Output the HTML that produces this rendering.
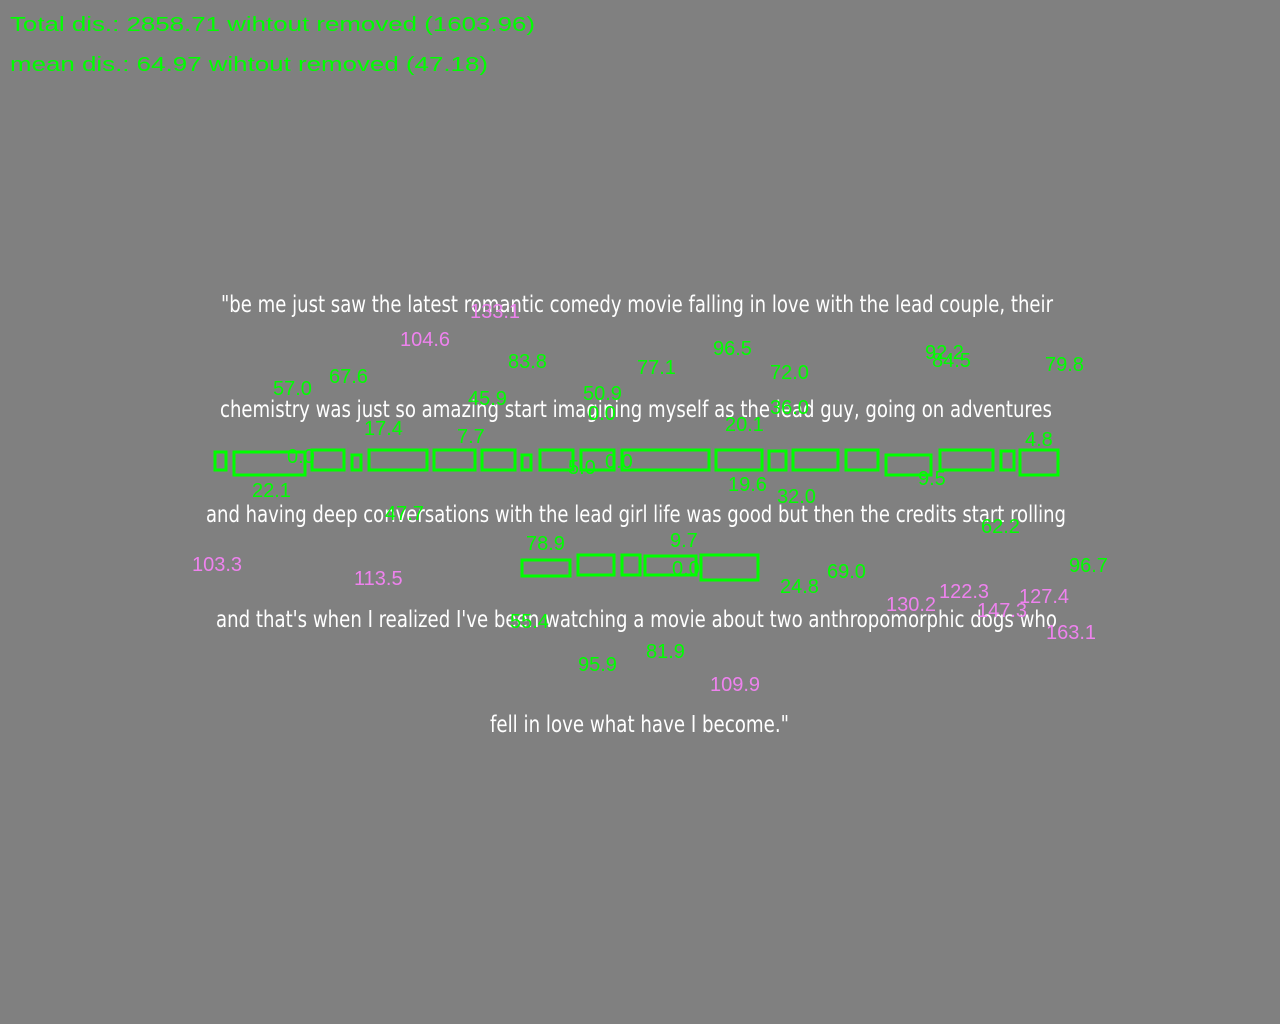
<!DOCTYPE html>
<html><head><meta charset="utf-8"><style>
html,body{margin:0;padding:0;background:#808080;width:1280px;height:1024px;overflow:hidden}
svg{display:block}
.g{fill:#00ff00;font-family:"Liberation Sans",sans-serif;font-size:20px}
.p{fill:#ee82ee;font-family:"Liberation Sans",sans-serif;font-size:20px}
.w{fill:#fff;font-family:"DejaVu Sans Condensed","DejaVu Sans",sans-serif;font-size:23px}
rect{fill:none;stroke:#00ff00;stroke-width:3}
</style></head><body>
<svg width="1280" height="1024" xmlns="http://www.w3.org/2000/svg">
<rect x="0" y="0" width="1280" height="1024" style="fill:#808080;stroke:none"/>
<text class="g" x="10" y="31" textLength="525" lengthAdjust="spacingAndGlyphs">Total dis.: 2858.71 wihtout removed (1603.96)</text>
<text class="g" x="10" y="71" textLength="478" lengthAdjust="spacingAndGlyphs">mean dis.: 64.97 wihtout removed (47.18)</text>

<g>
<rect x="215" y="452" width="11" height="18"/>
<rect x="234" y="452" width="71" height="23"/>
<rect x="312" y="450" width="32" height="20"/>
<rect x="352" y="455" width="9" height="15"/>
<rect x="369" y="450" width="58" height="20"/>
<rect x="434" y="450" width="41" height="20"/>
<rect x="482" y="450" width="33" height="20"/>
<rect x="522" y="455" width="9" height="15"/>
<rect x="540" y="450" width="33" height="20"/>
<rect x="581" y="450" width="33" height="20"/>
<rect x="622" y="450" width="87" height="20"/>
<rect x="716" y="450" width="46" height="20"/>
<rect x="769" y="451" width="17" height="19"/>
<rect x="793" y="450" width="45" height="20"/>
<rect x="846" y="450" width="32" height="20"/>
<rect x="886" y="455" width="45" height="20"/>
<rect x="940" y="450" width="53" height="20"/>
<rect x="1001" y="451" width="13" height="19"/>
<rect x="1020" y="450" width="38" height="25"/>
<rect x="522" y="560" width="48" height="16"/>
<rect x="578" y="555" width="36" height="20"/>
<rect x="622" y="555" width="18" height="20"/>
<rect x="645" y="556" width="51" height="19"/>
<rect x="701" y="555" width="57" height="25"/>
</g>

<text class="w" x="221" y="312" textLength="832" lengthAdjust="spacingAndGlyphs">"be me just saw the latest romantic comedy movie falling in love with the lead couple, their</text>
<text class="w" x="220" y="417" textLength="832" lengthAdjust="spacingAndGlyphs">chemistry was just so amazing start imagining myself as the lead guy, going on adventures</text>
<text class="w" x="206" y="522" textLength="860" lengthAdjust="spacingAndGlyphs">and having deep conversations with the lead girl life was good but then the credits start rolling</text>
<text class="w" x="216" y="627" textLength="841" lengthAdjust="spacingAndGlyphs">and that's when I realized I've been watching a movie about two anthropomorphic dogs who</text>
<text class="w" x="490" y="732" textLength="299" lengthAdjust="spacingAndGlyphs">fell in love what have I become."</text>

<text class="p" x="400" y="346">104.6</text>
<text class="p" x="470" y="318">133.1</text>
<text class="g" x="508" y="368">83.8</text>
<text class="g" x="637" y="374">77.1</text>
<text class="g" x="713" y="355">96.5</text>
<text class="g" x="770" y="379">72.0</text>
<text class="g" x="925" y="359">92.2</text>
<text class="g" x="932" y="367">84.5</text>
<text class="g" x="1045" y="371">79.8</text>
<text class="g" x="273" y="395">57.0</text>
<text class="g" x="329" y="383">67.6</text>
<text class="g" x="468" y="405">45.9</text>
<text class="g" x="583" y="400">50.9</text>
<text class="g" x="588" y="420">0.0</text>
<text class="g" x="364" y="435">17.4</text>
<text class="g" x="457" y="443">7.7</text>
<text class="g" x="725" y="431">20.1</text>
<text class="g" x="770" y="414">36.0</text>
<text class="g" x="1025" y="446">4.8</text>
<text class="g" x="287" y="463">0.0</text>
<text class="g" x="568" y="474">5.0</text>
<text class="g" x="605" y="468">0.0</text>
<text class="g" x="252" y="497">22.1</text>
<text class="g" x="728" y="491">19.6</text>
<text class="g" x="777" y="503">32.0</text>
<text class="g" x="918" y="485">9.5</text>
<text class="g" x="385" y="520">47.7</text>
<text class="g" x="981" y="533">62.2</text>
<text class="g" x="526" y="550">78.9</text>
<text class="g" x="670" y="547">9.7</text>
<text class="g" x="672" y="575">0.0</text>
<text class="p" x="192" y="571">103.3</text>
<text class="p" x="354" y="585">113.5</text>
<text class="g" x="780" y="593">24.8</text>
<text class="g" x="827" y="578">69.0</text>
<text class="g" x="1069" y="572">96.7</text>
<text class="p" x="939" y="598">122.3</text>
<text class="p" x="1019" y="603">127.4</text>
<text class="p" x="886" y="611">130.2</text>
<text class="p" x="977" y="617">147.3</text>
<text class="p" x="1046" y="639">163.1</text>
<text class="g" x="510" y="628">55.4</text>
<text class="g" x="578" y="671">95.9</text>
<text class="g" x="646" y="658">81.9</text>
<text class="p" x="710" y="691">109.9</text>
</svg>
</body></html>
